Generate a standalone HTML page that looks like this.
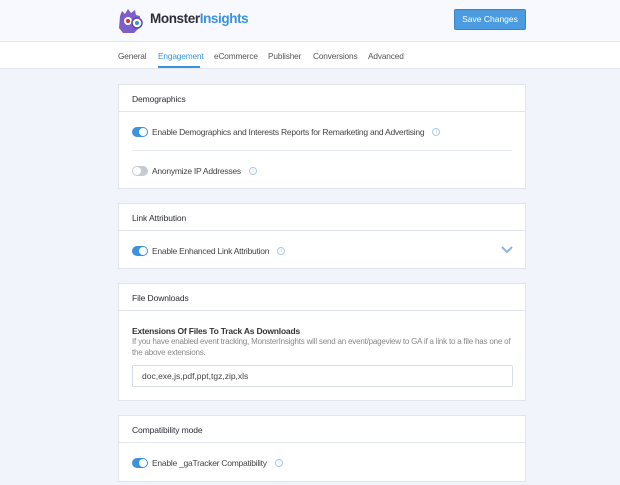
<!DOCTYPE html>
<html><head><style>
*{box-sizing:border-box;margin:0;padding:0}
body{width:620px;height:485px;overflow:hidden;background:#f2f4fb;font-family:"Liberation Sans",sans-serif;color:#393f4c;position:relative}
.hdr{position:absolute;left:0;top:0;width:620px;height:42px;background:#f8f9fe;border-bottom:1px solid #e3e6ee}
.nav{position:absolute;left:0;top:42px;width:620px;height:27px;background:#fff;border-bottom:1px solid #e3e6ee}
.nav span{position:absolute;top:9px;font-size:8.3px;color:#555;letter-spacing:-0.15px}
.nav .a{color:#3a93dd}
.card{position:absolute;left:118px;width:408px;background:#fff;border:1px solid #e1e5ee}
.ch{height:27px;border-bottom:1px solid #e1e5ee;font-size:8.5px;padding:9px 0 0 13px;color:#2a2d35;letter-spacing:-0.1px}
.row{position:absolute;left:13px;font-size:8.5px;color:#444;display:flex;align-items:center;letter-spacing:-0.25px}
.tg{width:16px;height:10px;border-radius:5px;background:#3a93dd;position:relative;margin-right:4px}
.tg:after{content:"";position:absolute;right:1px;top:1px;width:8px;height:8px;border-radius:50%;background:#fff}
.tg.off{background:#c5cad3}.tg.off:after{right:auto;left:1px}
.i{display:inline-block;width:8px;height:8px;border:1px solid #a9c9ec;border-radius:50%;margin-left:8px;font-size:5px;color:#a9c9ec;text-align:center;line-height:6px}
</style></head><body>
<div class="hdr">
<svg style="position:absolute;left:117px;top:8px" width="28" height="26" viewBox="0 0 28 26"><path d="M3 8 L5 3 L8 6 L11 1 L14 5 L18 2 L19 7 L23 8 L22 20 L17 25 L6 25 L2 20Z" fill="#7c5fc9"/><circle cx="11" cy="13" r="4" fill="#fff"/><circle cx="11" cy="13" r="2" fill="#c33"/><circle cx="20" cy="15" r="5" fill="#fff" stroke="#5a4b9f" stroke-width="1.5"/><circle cx="20" cy="15" r="2" fill="#3a93dd"/></svg>
<div style="position:absolute;left:150px;top:11px;font-size:13.5px;font-weight:bold;color:#2c2f38;letter-spacing:-0.4px">Monster<span style="color:#3a93dd">Insights</span></div>
<div style="position:absolute;left:454px;top:9px;width:72px;height:21px;background:#4b9be0;border:1px solid #3a85c8;border-radius:2px;color:#fff;font-size:8.5px;text-align:center;line-height:19px">Save Changes</div>
</div>
<div class="nav">
<span style="left:118px">General</span>
<span class="a" style="left:158px">Engagement</span>
<div style="position:absolute;left:158px;top:24px;width:42px;height:2px;background:#3a93dd"></div>
<span style="left:214px">eCommerce</span>
<span style="left:268px">Publisher</span>
<span style="left:313px">Conversions</span>
<span style="left:368px">Advanced</span>
</div>
<div class="card" style="top:84px;height:105px"><div class="ch">Demographics</div>
<div class="row" style="top:42px"><div class="tg"></div>Enable Demographics and Interests Reports for Remarketing and Advertising<span class="i">i</span></div>
<div style="position:absolute;left:13px;top:65px;width:380px;border-top:1px solid #e5e9f0"></div>
<div class="row" style="top:81px"><div class="tg off"></div>Anonymize IP Addresses<span class="i">i</span></div>
</div>
<div class="card" style="top:203px;height:66px"><div class="ch">Link Attribution</div>
<div class="row" style="top:42px"><div class="tg"></div>Enable Enhanced Link Attribution<span class="i">i</span></div>
<svg style="position:absolute;left:382px;top:42px" width="12" height="8"><path d="M1 1 L6 6 L11 1" stroke="#8fb4dd" stroke-width="2" fill="none"/></svg>
</div>
<div class="card" style="top:283px;height:118px"><div class="ch">File Downloads</div>
<div style="position:absolute;left:13px;top:42px;font-size:8.5px;font-weight:bold;color:#333;letter-spacing:-0.2px">Extensions Of Files To Track As Downloads</div>
<div style="position:absolute;left:13px;top:53px;width:385px;font-size:8px;line-height:10.5px;color:#888;letter-spacing:-0.2px">If you have enabled event tracking, MonsterInsights will send an event/pageview to GA if a link to a file has one of the above extensions.</div>
<div style="position:absolute;left:13px;top:81px;width:381px;height:22px;border:1px solid #d6dde8;border-radius:2px;font-size:8.5px;padding:5px 0 0 9px;color:#444">doc,exe,js,pdf,ppt,tgz,zip,xls</div>
</div>
<div class="card" style="top:415px;height:67px"><div class="ch">Compatibility mode</div>
<div class="row" style="top:42px"><div class="tg"></div>Enable _gaTracker Compatibility<span class="i">i</span></div>
</div>
</body></html>
